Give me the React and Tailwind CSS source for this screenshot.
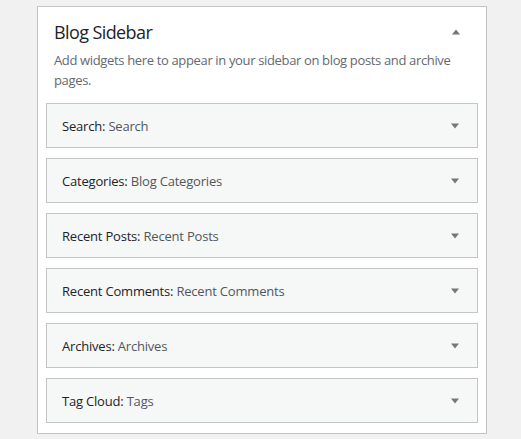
import React from "react";

const widgets = [
  { name: "Search", title: "Search" },
  { name: "Categories", title: "Blog Categories" },
  { name: "Recent Posts", title: "Recent Posts" },
  { name: "Recent Comments", title: "Recent Comments" },
  { name: "Archives", title: "Archives" },
  { name: "Tag Cloud", title: "Tags" },
];

const Arrow = ({ up }) => (
  <svg width="10" height="6" viewBox="0 0 10 6" className="block">
    {up ? (
      <polygon points="1,5.5 5,0.5 9,5.5" fill="#72777c" />
    ) : (
      <polygon points="1,0.5 9,0.5 5,5.5" fill="#72777c" />
    )}
  </svg>
);

const App = () => {
  return (
    <div
      className="min-h-screen bg-[#f1f1f1] pl-[37px] pt-[6px]"
      style={{ fontFamily: '"Open Sans", "Noto Sans", sans-serif' }}
    >
      <div className="w-[450px] bg-white border border-[#c3c4c7] px-[8px] pb-[10px]">
        <div className="px-[8px] pt-[13px]">
          <div className="flex items-center justify-between">
            <h2 className="text-[18px] leading-[24px] text-[#1d2327] font-normal tracking-[-0.6px]">
              Blog Sidebar
            </h2>
            <div className="mr-[9px]">
              <Arrow up />
            </div>
          </div>
          <p className="mt-[7px] mb-[13px] text-[13px] leading-[19.5px] text-[#646970] tracking-[-0.35px]">
            Add widgets here to appear in your sidebar on blog posts and archive
            pages.
          </p>
        </div>
        <div className="flex flex-col gap-[10px]">
          {widgets.map((w) => (
            <div
              key={w.name}
              className="h-[45px] flex items-center justify-between bg-[#f6f7f7] border border-[#c3c4c7] pl-[15px] pr-[17px]"
            >
              <span className="pt-[2px] text-[13px] text-[#1d2327] tracking-[-0.2px]">
                <span className="font-medium">{w.name}:</span>{" "}
                <span className="text-[#50575e]">{w.title}</span>
              </span>
              <Arrow />
            </div>
          ))}
        </div>
      </div>
    </div>
  );
};

export default App;
